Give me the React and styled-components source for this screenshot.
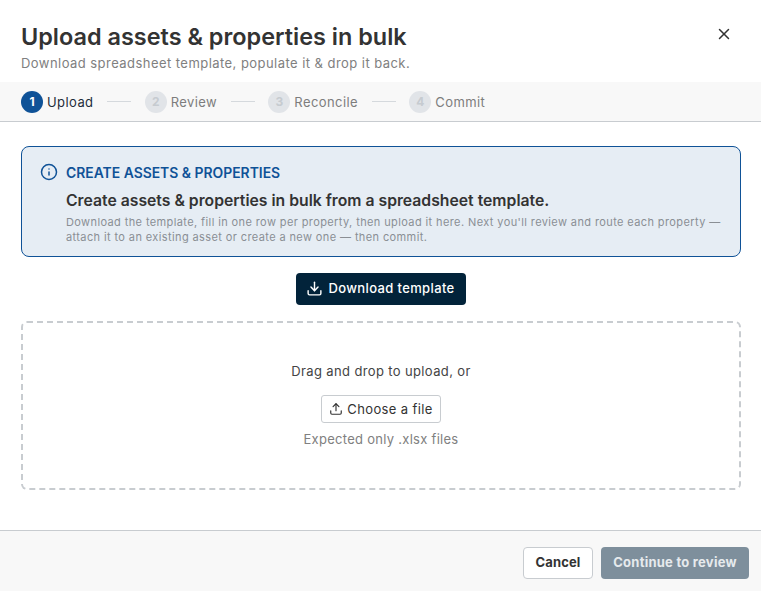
import React from 'react';
import styled, { createGlobalStyle } from 'styled-components';
import { X, Info, Download, Upload } from 'lucide-react';

const Global = createGlobalStyle`
  html, body { margin: 0; padding: 0; background: #fff; }
  body { font-family: Inter, "Liberation Sans", sans-serif; color: #333; }
  * { box-sizing: border-box; }
`;

const Modal = styled.div`
  width: 761px;
  height: 591px;
  display: flex;
  flex-direction: column;
  background: #fff;
`;

const Header = styled.header`
  height: 82px;
  padding: 21px 21px 0;
  display: flex;
  justify-content: space-between;
  align-items: flex-start;
`;

const Title = styled.h1`
  margin: 0;
  font-size: 23.45px;
  line-height: 32px;
  font-weight: 600;
  color: #333;
`;

const Subtitle = styled.p`
  margin: 1px 0 0;
  font-size: 13px;
  line-height: 18px;
  letter-spacing: 0.45px;
  color: #808080;
`;

const CloseButton = styled.button`
  display: flex;
  border: 0;
  background: none;
  padding: 0;
  margin: 4px 7px 0 0;
  color: #333;
`;

const Stepper = styled.nav`
  height: 40px;
  padding: 0 21px;
  display: flex;
  align-items: center;
  background: #f8f8f8;
  border-bottom: 1px solid #c8ccd0;
`;

const Step = styled.div`
  display: flex;
  align-items: center;
  gap: 4px;
  font-size: 13px;
  letter-spacing: 0.42px;
  color: ${p => (p.$active ? '#1f2d3a' : '#7d7d7d')};
`;

const StepDot = styled.span`
  width: 22px;
  height: 22px;
  border-radius: 50%;
  display: flex;
  align-items: center;
  justify-content: center;
  font-size: 12px;
  font-weight: 700;
  letter-spacing: 0;
  background: ${p => (p.$active ? '#0f5297' : '#e1e4e8')};
  color: ${p => (p.$active ? '#fff' : '#c6cbd0')};
`;

const StepLine = styled.span`
  width: 24px;
  height: 1px;
  margin: 0 13.6px;
  background: #d5d9dd;
`;

const Body = styled.main`
  flex: 1;
  padding: 24px 20px 0 21px;
  display: flex;
  flex-direction: column;
  align-items: center;
`;

const Alert = styled.section`
  width: 100%;
  height: 111px;
  padding: 16px 10px 16px 18px;
  display: grid;
  grid-template-columns: 18px 1fr;
  column-gap: 8px;
  background: #e6edf4;
  border: 1px solid #0f5297;
  border-radius: 8px;
`;

const AlertIcon = styled.span`
  display: flex;
  color: #0f5297;
`;

const AlertLabel = styled.div`
  font-size: 13.9px;
  line-height: 20px;
  font-weight: 600;
  color: #0f5297;
`;

const AlertHeading = styled.div`
  margin-top: 8px;
  font-size: 15.75px;
  line-height: 20px;
  font-weight: 600;
  color: #333;
`;

const AlertText = styled.p`
  margin: 4px 0 0;
  font-size: 11px;
  line-height: 14.5px;
  letter-spacing: 0.39px;
  color: #8a8f94;
`;

const PrimaryButton = styled.button`
  margin-top: 16px;
  width: 170px;
  height: 32px;
  flex: none;
  display: flex;
  align-items: center;
  justify-content: center;
  gap: 5px;
  padding: 0 1px 2px 0;
  border: 0;
  border-radius: 4px;
  background: #02233a;
  color: #fff;
  font: 500 13px Inter, sans-serif;
  letter-spacing: 0.37px;
`;

const DropZone = styled.section`
  margin-top: 16px;
  width: 100%;
  height: 169px;
  padding-top: 39px;
  display: flex;
  flex-direction: column;
  align-items: center;
  border: 2px dashed #c8ccd0;
  border-radius: 6px;
`;

const DropText = styled.div`
  font-size: 13px;
  line-height: 18px;
  letter-spacing: 0.37px;
  color: #444;
`;

const FileButton = styled.button`
  margin-top: 15px;
  width: 120px;
  height: 28px;
  display: flex;
  align-items: center;
  justify-content: center;
  gap: 4px;
  padding: 0 0 1px;
  border: 1px solid #c8ccd0;
  border-radius: 3px;
  background: #fff;
  color: #333;
  font: 400 13px Inter, sans-serif;
  letter-spacing: 0.37px;
`;

const Hint = styled.div`
  margin-top: 7px;
  font-size: 13px;
  line-height: 18px;
  letter-spacing: 0.28px;
  color: #808080;
`;

const Footer = styled.footer`
  height: 61px;
  padding: 16px 12px 0 0;
  display: flex;
  justify-content: flex-end;
  gap: 8px;
  background: #f8f8f8;
  border-top: 1px solid #c8ccd0;
`;

const FooterButton = styled.button`
  height: 32px;
  padding: 0 0 2px;
  width: ${p => (p.$primary ? '148px' : '70px')};
  border: ${p => (p.$primary ? '0' : '1px solid #c8ccd0')};
  border-radius: 4px;
  background: ${p => (p.$primary ? '#7e8f9c' : '#fff')};
  color: ${p => (p.$primary ? '#e6eaed' : '#333')};
  font: 700 13px Inter, sans-serif;
  letter-spacing: ${p => (p.$primary ? '0.25px' : '0.1px')};
`;

const steps = ['Upload', 'Review', 'Reconcile', 'Commit'];

export default function App() {
  return (
    <Modal>
      <Global />
      <Header>
        <div>
          <Title>Upload assets &amp; properties in bulk</Title>
          <Subtitle>Download spreadsheet template, populate it &amp; drop it back.</Subtitle>
        </div>
        <CloseButton aria-label="Close"><X size={18} /></CloseButton>
      </Header>
      <Stepper>
        {steps.map((name, i) => (
          <React.Fragment key={name}>
            {i > 0 && <StepLine />}
            <Step $active={i === 0}>
              <StepDot $active={i === 0}>{i + 1}</StepDot>
              {name}
            </Step>
          </React.Fragment>
        ))}
      </Stepper>
      <Body>
        <Alert>
          <AlertIcon><Info size={18} /></AlertIcon>
          <div>
            <AlertLabel>CREATE ASSETS &amp; PROPERTIES</AlertLabel>
            <AlertHeading>Create assets &amp; properties in bulk from a spreadsheet template.</AlertHeading>
            <AlertText>
              Download the template, fill in one row per property, then upload it here. Next you'll review and route each property — attach it to an existing asset or create a new one — then commit.
            </AlertText>
          </div>
        </Alert>
        <PrimaryButton><Download size={17} />Download template</PrimaryButton>
        <DropZone>
          <DropText>Drag and drop to upload, or</DropText>
          <FileButton><Upload size={14} />Choose a file</FileButton>
          <Hint>Expected only .xlsx files</Hint>
        </DropZone>
      </Body>
      <Footer>
        <FooterButton>Cancel</FooterButton>
        <FooterButton $primary>Continue to review</FooterButton>
      </Footer>
    </Modal>
  );
}
